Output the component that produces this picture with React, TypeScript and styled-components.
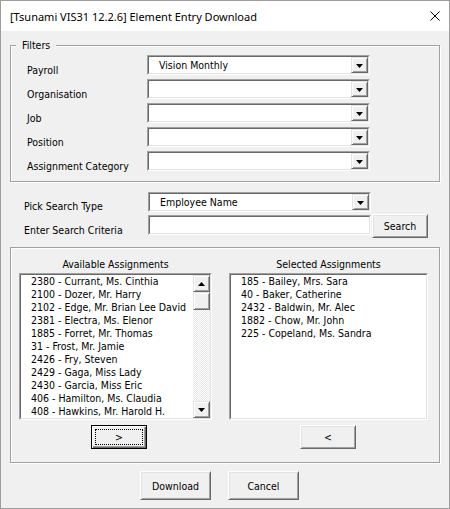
import React from 'react';
import styled, { createGlobalStyle } from 'styled-components';

const UI_FONT = `"DejaVu Sans Condensed", "DejaVu Sans", sans-serif`;

const GlobalStyle = createGlobalStyle`
  html, body {
    margin: 0;
    padding: 0;
    background: #f0f0f0;
  }
  * {
    box-sizing: border-box;
  }
`;

const Window = styled.div`
  width: 450px;
  height: 509px;
  border: 1px solid #9d9d9d;
  background: #f0f0f0;
  display: flex;
  flex-direction: column;
  font-family: ${UI_FONT};
  font-size: 10.5px;
  color: #000;
`;

const TitleBar = styled.div`
  height: 30px;
  background: #fff;
  display: flex;
  align-items: center;
  padding: 0 9px;
`;

const TitleText = styled.span`
  font-family: "Noto Sans", sans-serif;
  font-size: 11px;
  color: #000;
`;

const CloseIcon = styled.svg`
  margin-left: auto;
  width: 10px;
  height: 10px;
`;

const Body = styled.div`
  flex: 1;
  display: flex;
  flex-direction: column;
  padding: 14px 9px 0;
`;

/* etched group box */
const Frame = styled.div<{ $pad: string; $mt?: number }>`
  position: relative;
  border: 1px solid #a0a0a0;
  box-shadow: 1px 1px 0 #fff, inset 1px 1px 0 #fff;
  padding: ${(p) => p.$pad};
  margin-top: ${(p) => p.$mt ?? 0}px;
`;

const Legend = styled.span`
  position: absolute;
  top: -8px;
  left: 5px;
  padding: 0 6px;
  background: #f0f0f0;
  line-height: 15px;
`;

const FilterList = styled.div`
  display: flex;
  flex-direction: column;
  gap: 4px;
`;

const Row = styled.div<{ $h: number; $mt?: number; $ml?: number }>`
  display: flex;
  align-items: flex-start;
  height: ${(p) => p.$h}px;
  margin-top: ${(p) => p.$mt ?? 0}px;
  margin-left: ${(p) => p.$ml ?? 0}px;
`;

const FieldLabel = styled.div<{ $width: number; $top: number }>`
  width: ${(p) => p.$width}px;
  padding-top: ${(p) => p.$top}px;
  line-height: 13px;
  white-space: nowrap;
  flex-shrink: 0;
`;

/* sunken 3D edge used by combo, textbox and lists */
const Sunken = styled.div<{ $width: number; $height: number; $mt?: number }>`
  width: ${(p) => p.$width}px;
  height: ${(p) => p.$height}px;
  margin-top: ${(p) => p.$mt ?? 0}px;
  border: 1px solid;
  border-color: #a0a0a0 #fff #fff #a0a0a0;
  flex-shrink: 0;
`;

const SunkenInner = styled.div`
  height: 100%;
  border: 1px solid;
  border-color: #696969 #e3e3e3 #e3e3e3 #696969;
  background: #fff;
  display: flex;
  align-items: stretch;
`;

const ComboValue = styled.div`
  flex: 1;
  padding-left: 10px;
  line-height: 16px;
  white-space: nowrap;
`;

const Raised = styled.div`
  background: #f0f0f0;
  border: 1px solid;
  border-color: #e3e3e3 #696969 #696969 #e3e3e3;
  box-shadow: inset 1px 1px 0 #fff, inset -1px -1px 0 #a0a0a0;
  display: flex;
  align-items: center;
  justify-content: center;
`;

const DropButton = styled(Raised)`
  width: 17px;
  height: 16px;
  padding-top: 1px;
`;

const ScrollButton = styled(Raised)`
  width: 17px;
  height: 17px;
`;

const ScrollThumb = styled(Raised)`
  width: 17px;
  height: 18px;
`;

const ScrollTrack = styled.div`
  flex: 1;
  background: repeating-conic-gradient(#fff 0 25%, #e6e6e6 0 50%) 0 0 / 2px 2px;
`;

const ScrollBar = styled.div`
  width: 17px;
  display: flex;
  flex-direction: column;
`;

const Button = styled.button<{ $width: number; $height: number; $focused?: boolean; $ml?: number }>`
  position: relative;
  width: ${(p) => p.$width}px;
  height: ${(p) => p.$height}px;
  margin-left: ${(p) => p.$ml ?? 0}px;
  padding: 0;
  font-family: ${UI_FONT};
  font-size: 10.5px;
  color: #000;
  background: #f0f0f0;
  border: 1px solid;
  border-color: ${(p) => (p.$focused ? '#000' : '#fff #696969 #696969 #fff')};
  box-shadow: ${(p) =>
    p.$focused
      ? 'inset 1px 1px 0 #fff, inset -1px -1px 0 #696969, inset -2px -2px 0 #a0a0a0'
      : 'inset 1px 1px 0 #e3e3e3, inset -1px -1px 0 #a0a0a0'};
  flex-shrink: 0;

  &::after {
    content: '';
    display: ${(p) => (p.$focused ? 'block' : 'none')};
    position: absolute;
    inset: 3px;
    border: 1px dotted #000;
  }
`;

const Columns = styled.div`
  display: flex;
  gap: 17px;
`;

const Column = styled.div<{ $width: number }>`
  width: ${(p) => p.$width}px;
  display: flex;
  flex-direction: column;
`;

const ColumnTitle = styled.div`
  text-align: center;
  line-height: 13px;
  margin-bottom: 2px;
`;

const Items = styled.div`
  flex: 1;
  padding-left: 10px;
  overflow: hidden;
`;

const Item = styled.div`
  line-height: 13px;
  white-space: nowrap;
`;

const MoveButtonWrap = styled.div<{ $indent: number }>`
  margin-top: 5px;
  margin-left: ${(p) => p.$indent}px;
`;

const Footer = styled.div`
  display: flex;
  gap: 17px;
  margin-top: 8px;
  padding-left: 130px;
`;

const Arrow = ({ dir }: { dir: 'up' | 'down' }) => (
  <svg width="7" height="4" viewBox="0 0 7 4">
    <polygon points={dir === 'down' ? '0,0 7,0 3.5,4' : '0,4 7,4 3.5,0'} fill="#000" />
  </svg>
);

const Combo = ({ value, width, mt }: { value?: string; width: number; mt?: number }) => (
  <Sunken $width={width} $height={20} $mt={mt}>
    <SunkenInner>
      <ComboValue>{value}</ComboValue>
      <DropButton>
        <Arrow dir="down" />
      </DropButton>
    </SunkenInner>
  </Sunken>
);

const filters = [
  { label: 'Payroll', value: 'Vision Monthly' },
  { label: 'Organisation', value: '' },
  { label: 'Job', value: '' },
  { label: 'Position', value: '' },
  { label: 'Assignment Category', value: '' },
];

const available = [
  '2380 - Currant, Ms. Cinthia',
  '2100 - Dozer, Mr. Harry',
  '2102 - Edge, Mr. Brian Lee David',
  '2381 - Electra, Ms. Elenor',
  '1885 - Forret, Mr. Thomas',
  '31 - Frost, Mr. Jamie',
  '2426 - Fry, Steven',
  '2429 - Gaga, Miss Lady',
  '2430 - Garcia, Miss Eric',
  '406 - Hamilton, Ms. Claudia',
  '408 - Hawkins, Mr. Harold H.',
];

const selected = [
  '185 - Bailey, Mrs. Sara',
  '40 - Baker, Catherine',
  '2432 - Baldwin, Mr. Alec',
  '1882 - Chow, Mr. John',
  '225 - Copeland, Ms. Sandra',
];

export default function App() {
  return (
    <>
      <GlobalStyle />
      <Window>
        <TitleBar>
          <TitleText>[Tsunami VIS31 12.2.6] Element Entry Download</TitleText>
          <CloseIcon viewBox="0 0 10 10">
            <path d="M0.5 0.5 L9.5 9.5 M9.5 0.5 L0.5 9.5" stroke="#000" strokeWidth="1" />
          </CloseIcon>
        </TitleBar>

        <Body>
          <Frame $pad="9px 0 10px 16px">
            <Legend>Filters</Legend>
            <FilterList>
              {filters.map((f) => (
                <Row key={f.label} $h={20}>
                  <FieldLabel $width={120} $top={9}>
                    {f.label}
                  </FieldLabel>
                  <Combo value={f.value} width={223} />
                </Row>
              ))}
            </FilterList>
          </Frame>

          <Row $h={20} $mt={10} $ml={14}>
            <FieldLabel $width={124} $top={8}>
              Pick Search Type
            </FieldLabel>
            <Combo value="Employee Name" width={223} />
          </Row>
          <Row $h={24} $mt={2} $ml={14}>
            <FieldLabel $width={124} $top={10}>
              Enter Search Criteria
            </FieldLabel>
            <Sunken $width={223} $height={20} $mt={1}>
              <SunkenInner />
            </Sunken>
            <Button $width={56} $height={24} $ml={1}>
              Search
            </Button>
          </Row>

          <Frame $pad="10px 11px 13px 8px" $mt={9}>
            <Columns>
              <Column $width={193}>
                <ColumnTitle>Available Assignments</ColumnTitle>
                <Sunken $width={193} $height={147}>
                  <SunkenInner>
                    <Items>
                      {available.map((a) => (
                        <Item key={a}>{a}</Item>
                      ))}
                    </Items>
                    <ScrollBar>
                      <ScrollButton>
                        <Arrow dir="up" />
                      </ScrollButton>
                      <ScrollThumb />
                      <ScrollTrack />
                      <ScrollButton>
                        <Arrow dir="down" />
                      </ScrollButton>
                    </ScrollBar>
                  </SunkenInner>
                </Sunken>
                <MoveButtonWrap $indent={72}>
                  <Button $width={56} $height={24} $focused>
                    &gt;
                  </Button>
                </MoveButtonWrap>
              </Column>

              <Column $width={199}>
                <ColumnTitle>Selected Assignments</ColumnTitle>
                <Sunken $width={199} $height={147}>
                  <SunkenInner>
                    <Items>
                      {selected.map((s) => (
                        <Item key={s}>{s}</Item>
                      ))}
                    </Items>
                  </SunkenInner>
                </Sunken>
                <MoveButtonWrap $indent={71}>
                  <Button $width={56} $height={24}>
                    &lt;
                  </Button>
                </MoveButtonWrap>
              </Column>
            </Columns>
          </Frame>

          <Footer>
            <Button $width={71} $height={29}>
              Download
            </Button>
            <Button $width={71} $height={29}>
              Cancel
            </Button>
          </Footer>
        </Body>
      </Window>
    </>
  );
}
